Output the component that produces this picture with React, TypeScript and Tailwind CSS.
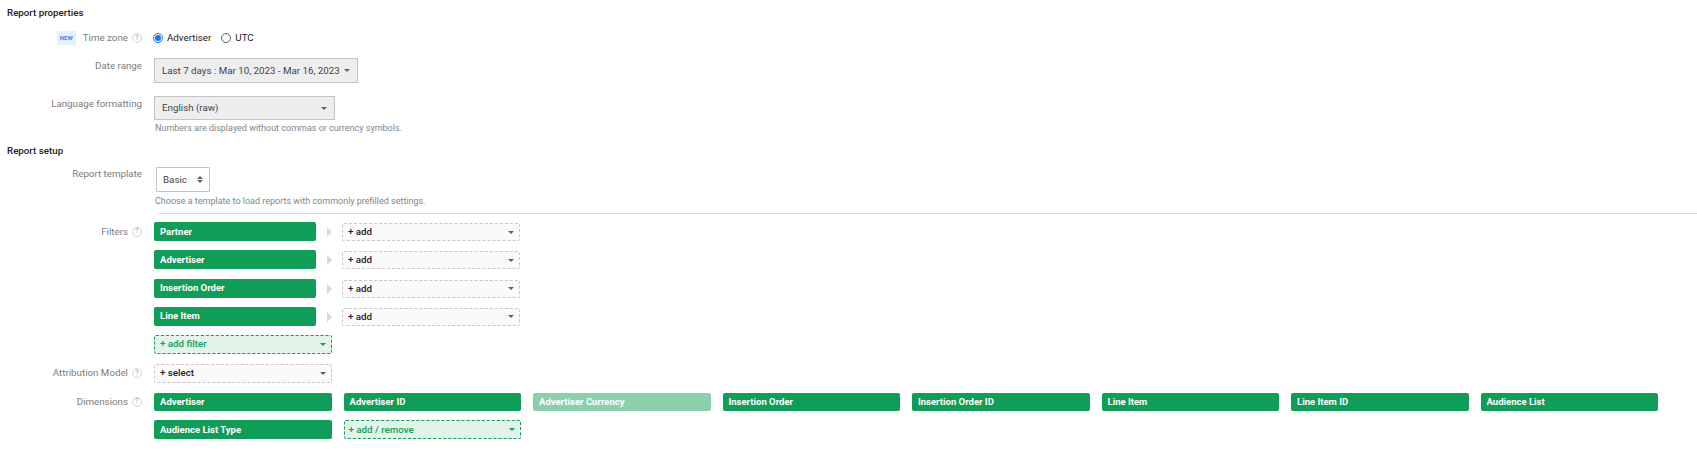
function Help() {
  return (
    <span className="ml-[4px] inline-flex h-[10px] w-[10px] shrink-0 items-center justify-center rounded-full border border-[#d4d4d4] text-[7px] leading-none text-[#9e9e9e]">
      ?
    </span>
  );
}

function Caret({ color = "border-t-[#616161]", big }: { color?: string; big?: boolean }) {
  return <span className={`h-0 w-0 border-x-transparent ${big ? "border-x-[3.5px] border-t-[3.5px]" : "border-x-[3px] border-t-[3px]"} ${color}`} />;
}

function Label({ text, help }: { text: string; help?: boolean }) {
  return (
    <div className="flex w-[142px] shrink-0 items-center justify-end text-[#7c7c7c]">
      <span>{text}</span>
      {help && <Help />}
    </div>
  );
}

function Chip({ text, faded }: { text: string; faded?: boolean }) {
  return (
    <div className={`flex h-[18.5px] w-[177.5px] items-center rounded-[2px] pl-[6px] text-[9.5px] font-bold text-white ${faded ? "bg-[#8bcfac]" : "bg-[#0f9d58]"}`}>
      {text}
    </div>
  );
}

function FilterRow({ text, help, label }: { text: string; help?: boolean; label?: string }) {
  return (
    <div className="flex h-[19px]">
      <div className="flex h-[19px] w-[142px] shrink-0 items-center justify-end text-[#7c7c7c]">
        {label && <span>{label}</span>}
        {help && <Help />}
      </div>
      <div className="ml-[12px] flex h-[19px] w-[162px] items-center rounded-[2px] bg-[#0f9d58] pl-[6px] text-[9.5px] font-bold text-white">{text}</div>
      <span className="ml-[11px] mt-[5px] h-0 w-0 border-y-[5px] border-l-[5px] border-y-transparent border-l-[#d8d8d8]" />
      <div className="ml-[10px] mt-px flex h-[18px] w-[178px] items-center justify-between rounded-[2px] border border-dashed border-[#c8c8c8] bg-[#fafafa] pl-[5px] pr-[5px] font-medium text-[#212121]">
        + add
        <Caret />
      </div>
    </div>
  );
}

export default function App() {
  return (
    <div className="h-[458px] w-[1697px] overflow-hidden bg-white pt-[7px] font-['Roboto',sans-serif] text-[9.75px] leading-[12px] text-[#212121]">
      <div className="ml-[7px] h-[12px] font-medium">Report properties</div>

      <div className="mt-[12px] flex h-[14px]">
        <div className="flex w-[142px] shrink-0 items-center justify-end text-[#7c7c7c]">
          <span className="mr-[7px] flex h-[14px] w-[19px] items-center justify-center rounded-[1px] bg-[#e8f0fe] text-[6px] font-bold text-[#4285f4]">NEW</span>
          <span>Time zone</span>
          <Help />
        </div>
        <div className="ml-[11px] flex items-center">
          <span className="flex h-[10px] w-[10px] items-center justify-center rounded-full border border-[#1a73e8]">
            <span className="h-[6px] w-[6px] rounded-full bg-[#1a73e8]" />
          </span>
          <span className="ml-[4px] text-[#212121]">Advertiser</span>
          <span className="ml-[10px] h-[10px] w-[10px] rounded-full border border-[#616161]" />
          <span className="ml-[4px] text-[#212121]">UTC</span>
        </div>
      </div>

      <div className="mt-[13px] flex h-[25px]">
        <div className="flex h-[16px] items-center self-start"><Label text="Date range" /></div>
        <div className="ml-[12px] flex w-[204px] items-center justify-between whitespace-nowrap border border-[#c4c4c4] bg-[#eeeeee] pl-[7px] pr-[7px] text-[#424242]">
          Last 7 days : Mar 10, 2023 - Mar 16, 2023
          <Caret big />
        </div>
      </div>

      <div className="mt-[13px] flex h-[24px]">
        <div className="flex h-[16px] items-center self-start"><Label text="Language formatting" /></div>
        <div className="ml-[12px] flex w-[181px] items-center justify-between border border-[#c4c4c4] bg-[#eeeeee] pl-[7px] pr-[7px] text-[#424242]">
          English (raw)
          <Caret big />
        </div>
      </div>
      <div className="ml-[155px] mt-[2px] text-[9px] text-[#80868b]">Numbers are displayed without commas or currency symbols.</div>

      <div className="ml-[7px] mt-[11px] h-[12px] font-medium">Report setup</div>

      <div className="mt-[10px] flex h-[25px]">
        <div className="flex h-[14px] items-center self-start"><Label text="Report template" /></div>
        <div className="ml-[14px] flex w-[54px] items-center justify-between rounded-[1px] border border-[#c4c4c4] bg-white pl-[6px] pr-[6px] text-[#424242]">
          Basic
          <span className="flex flex-col gap-[1px]">
            <span className="h-0 w-0 border-x-[3px] border-b-[3px] border-x-transparent border-b-[#616161]" />
            <span className="h-0 w-0 border-x-[3px] border-t-[3px] border-x-transparent border-t-[#616161]" />
          </span>
        </div>
      </div>
      <div className="ml-[155px] mt-[3px] text-[9px] text-[#80868b]">Choose a template to load reports with commonly prefilled settings.</div>
      <div className="ml-[158px] mt-[6px] h-px bg-[#dadada]" />

      <div className="mt-[8px] flex flex-col gap-[9.33px]">
        <FilterRow text="Partner" label="Filters" help />
        <FilterRow text="Advertiser" />
        <FilterRow text="Insertion Order" />
        <FilterRow text="Line Item" />
      </div>

      <div className="ml-[154px] mt-[9px] flex h-[19px] w-[178px] items-center justify-between rounded-[2px] border border-dashed border-[#0f9d58] bg-[#e2f3ea] pl-[5px] pr-[5px] font-medium text-[#0f9d58]">
        + add filter
        <Caret color="border-t-[#0f9d58]" />
      </div>

      <div className="mt-[10px] flex h-[19px]">
        <Label text="Attribution Model" help />
        <div className="ml-[12px] flex w-[178px] items-center justify-between rounded-[2px] border border-dashed border-[#c8c8c8] bg-[#fafafa] pl-[5px] pr-[5px] font-medium text-[#212121]">
          + select
          <Caret />
        </div>
      </div>

      <div className="mt-[10px] flex">
        <div className="flex h-[18px] items-center self-start"><Label text="Dimensions" help /></div>
        <div className="ml-[12px] flex flex-wrap gap-x-[12px] gap-y-[9px]">
          <Chip text="Advertiser" />
          <Chip text="Advertiser ID" />
          <Chip text="Advertiser Currency" faded />
          <Chip text="Insertion Order" />
          <Chip text="Insertion Order ID" />
          <Chip text="Line Item" />
          <Chip text="Line Item ID" />
          <Chip text="Audience List" />
          <Chip text="Audience List Type" />
          <div className="flex h-[18.5px] w-[177.5px] items-center justify-between rounded-[2px] border border-dashed border-[#0f9d58] bg-[#e2f3ea] pl-[4px] pr-[5px] font-medium text-[#0f9d58]">
            + add / remove
            <Caret color="border-t-[#0f9d58]" />
          </div>
        </div>
      </div>
    </div>
  );
}
